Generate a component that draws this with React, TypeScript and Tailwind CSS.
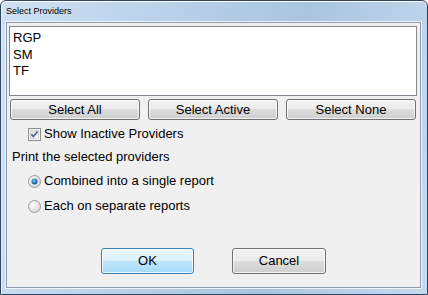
import React from 'react';

const providers = ['RGP', 'SM', 'TF'];

function WinButton({ label, isDefault = false, className = '' }: { label: string; isDefault?: boolean; className?: string }) {
  return (
    <div
      className={`flex items-center justify-center rounded-[3px] border ${
        isDefault
          ? 'border-[#3c7fb1] bg-[linear-gradient(#eaf6fd_0%,#d9f0fc_50%,#bee6fd_50%,#a7d9f5_100%)]'
          : 'border-[#707070] bg-[linear-gradient(#f2f2f2_0%,#ebebeb_50%,#dddddd_50%,#cfcfcf_100%)]'
      } shadow-[inset_0_0_0_1px_rgba(255,255,255,0.75)] text-[13px] text-black ${className}`}
    >
      {label}
    </div>
  );
}

function CheckBox({ checked }: { checked: boolean }) {
  return (
    <svg width="13" height="13" viewBox="0 0 13 13" className="shrink-0">
      <defs>
        <linearGradient id="cbg" x1="0" y1="0" x2="1" y2="1">
          <stop offset="0" stopColor="#dcdcdc" />
          <stop offset="1" stopColor="#ffffff" />
        </linearGradient>
      </defs>
      <rect x="0.5" y="0.5" width="12" height="12" fill="#f4f4f4" stroke="#8e8f8f" />
      <rect x="2.5" y="2.5" width="8" height="8" fill="url(#cbg)" stroke="#c2c2c2" strokeWidth="0.6" />
      {checked && <path d="M3.3 6.4 L5.4 8.6 L9.6 3.6" fill="none" stroke="#4a5f97" strokeWidth="1.6" />}
    </svg>
  );
}

function Radio({ checked }: { checked: boolean }) {
  return (
    <svg width="13" height="13" viewBox="0 0 13 13" className="shrink-0">
      <defs>
        <radialGradient id="rbg" cx="0.35" cy="0.35" r="0.8">
          <stop offset="0" stopColor="#ffffff" />
          <stop offset="1" stopColor="#d0d0d0" />
        </radialGradient>
        <radialGradient id="rdot" cx="0.4" cy="0.35" r="0.7">
          <stop offset="0" stopColor="#8ad0f6" />
          <stop offset="0.6" stopColor="#2a7dc6" />
          <stop offset="1" stopColor="#1a4f8a" />
        </radialGradient>
      </defs>
      <circle cx="6.5" cy="6.5" r="6" fill="url(#rbg)" stroke="#9a9a9a" />
      {checked && <circle cx="6.5" cy="6.5" r="2.8" fill="url(#rdot)" stroke="#1e5b98" strokeWidth="0.5" />}
    </svg>
  );
}

export default function App() {
  return (
    <div className="w-[428px] h-[295px] font-['Liberation_Sans',Arial,sans-serif]">
      <div className="w-full h-full flex flex-col rounded-t-[6px] border border-[#2f4560] shadow-[inset_0_1px_0_#ffffff,inset_1px_0_0_#e6eef8] bg-[linear-gradient(100deg,#d0e1f3_0%,#bcd3eb_30%,#aac4e0_65%,#c6daef_100%)] pl-[5px] pr-[6px] pb-[6px]">
        <div className="h-[21px] flex items-center text-[9px] text-black">Select Providers</div>
        <div className="flex-1 flex flex-col border border-[#8c9bad] bg-[#f0f0f0] shadow-[0_0_0_1px_#eef4fa]">
          {/* provider list */}
          <div className="mt-[3px] ml-[2px] w-[408px] h-[70px] border border-[#828790] bg-white pt-[3px] pl-[3px]">
            {providers.map((p) => (
              <div key={p} className="text-[13px] leading-[16.5px] text-black">
                {p}
              </div>
            ))}
          </div>

          <div className="mt-[3px] ml-[3px] flex gap-[8px]">
            <WinButton label="Select All" className="w-[130px] h-[21px]" />
            <WinButton label="Select Active" className="w-[130px] h-[21px]" />
            <WinButton label="Select None" className="w-[130px] h-[21px]" />
          </div>

          <div className="mt-[6px] ml-[21px] h-[16px] flex items-center gap-[3px] text-[13px] text-black">
            <CheckBox checked />
            <span>Show Inactive Providers</span>
          </div>

          <div className="mt-[7px] ml-[5px] h-[16px] flex items-center text-[13px] text-black">
            Print the selected providers
          </div>

          <div className="mt-[8px] ml-[21px] h-[16px] flex items-center gap-[3px] text-[13px] text-black">
            <Radio checked />
            <span>Combined into a single report</span>
          </div>

          <div className="mt-[9px] ml-[21px] h-[16px] flex items-center gap-[3px] text-[13px] text-black">
            <Radio checked={false} />
            <span>Each on separate reports</span>
          </div>

          <div className="mt-[34px] flex justify-center gap-[38px]">
            <WinButton label="OK" isDefault className="w-[93px] h-[26px]" />
            <WinButton label="Cancel" className="w-[94px] h-[26px]" />
          </div>
        </div>
      </div>
    </div>
  );
}
